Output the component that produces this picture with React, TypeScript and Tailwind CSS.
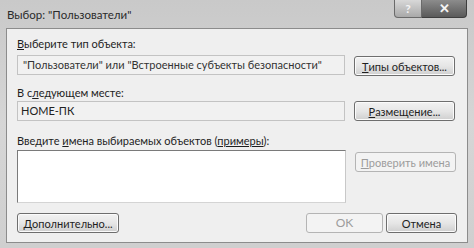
import React from 'react';

const font = { fontFamily: 'Lato, "Noto Sans", sans-serif' };

function Btn({ children, disabled, className = '' }: { children: React.ReactNode; disabled?: boolean; className?: string }) {
  return (
    <div
      className={
        'flex h-[20px] items-center justify-center whitespace-nowrap rounded-[3px] border text-[11px] leading-none ' +
        (disabled
          ? 'border-[#b4b4b4] bg-[#f3f3f3] text-[#9c9c9c] '
          : 'border-[#6e6e6e] bg-gradient-to-b from-[#f2f2f2] via-[#e6e6e6] to-[#cfcfcf] text-[#1e1e1e] shadow-[inset_0_0_0_1px_#fbfbfb] ') +
        className
      }
    >
      {children}
    </div>
  );
}

export default function App() {
  return (
    <div
      className="flex h-[248px] w-[474px] flex-col overflow-hidden whitespace-nowrap bg-gradient-to-b from-[#c9c9c9] via-[#d6d6d6] to-[#cfcfcf]"
      style={font}
    >
      {/* title bar */}
      <div className="flex h-[28px] shrink-0 items-start justify-between">
        <div className="pl-[7px] pt-[6px] text-[11.5px] text-[#2a2a2a]">Выбор: "Пользователи"</div>
        <div className="mr-[7px] flex h-[18px]">
          <div className="flex w-[28px] items-center justify-center rounded-bl-[4px] border border-t-0 border-[#6a6a6a] bg-gradient-to-b from-[#d8d8d8] to-[#a9a9a9] text-[12px] font-bold text-[#f4f4f4]">
            ?
          </div>
          <div className="flex w-[45px] items-center justify-center rounded-br-[4px] border border-l-0 border-t-0 border-[#3e3e3e] bg-gradient-to-b from-[#8c8c8c] to-[#5a5a5a] text-[13px] font-bold text-[#f4f4f4]">
            ✕
          </div>
        </div>
      </div>

      {/* client area */}
      <div className="mx-[6px] flex h-[215px] shrink-0 flex-col border border-[#8c8c8c] bg-[#efefef] px-[10px] pt-[7px] text-[11px] text-[#1e1e1e]">
        <div className="h-[15px] leading-[15px]">
          <span className="underline">В</span>ыберите тип объекта:
        </div>
        <div className="mt-[4px] flex gap-[9px]">
          <div className="flex h-[20px] w-[328px] items-center border border-[#c3c3c3] bg-[#f1f1f1] pl-[5px] text-[#333]">
            "Пользователи" или "Встроенные субъекты безопасности"
          </div>
          <Btn className="mt-[1px] w-[101px]">
            <span className="underline">Т</span>ипы объектов...
          </Btn>
        </div>
        <div className="mt-[9px] h-[15px] leading-[15px]">
          В с<span className="underline">л</span>едующем месте:
        </div>
        <div className="mt-[1px] flex gap-[9px]">
          <div className="flex h-[20px] w-[328px] items-center border border-[#c3c3c3] bg-[#f1f1f1] pl-[3px] text-[#222]">
            HOME-ПК
          </div>
          <Btn className="w-[101px]">
            <span className="underline">Р</span>азмещение...
          </Btn>
        </div>
        <div className="mt-[12px] h-[15px] leading-[15px]">
          Введите <span className="underline">и</span>мена выбираемых объектов (<span className="underline">примеры</span>):
        </div>
        <div className="mt-[2px] flex gap-[9px]">
          <div className="h-[53px] w-[329px] border border-[#7a7a7a] border-b-[#d4d4d4] border-r-[#c8c8c8] bg-white" />
          <Btn disabled className="mt-[2px] w-[101px]">
            <span className="underline">П</span>роверить имена
          </Btn>
        </div>
        <div className="mt-[10px] flex">
          <Btn className="w-[102px]">
            <span className="underline">Д</span>ополнительно...
          </Btn>
          <div className="flex-1" />
          <Btn disabled className="w-[77px] text-[12px]">
            OK
          </Btn>
          <Btn className="ml-[3px] w-[71px]">Отмена</Btn>
        </div>
      </div>
    </div>
  );
}
